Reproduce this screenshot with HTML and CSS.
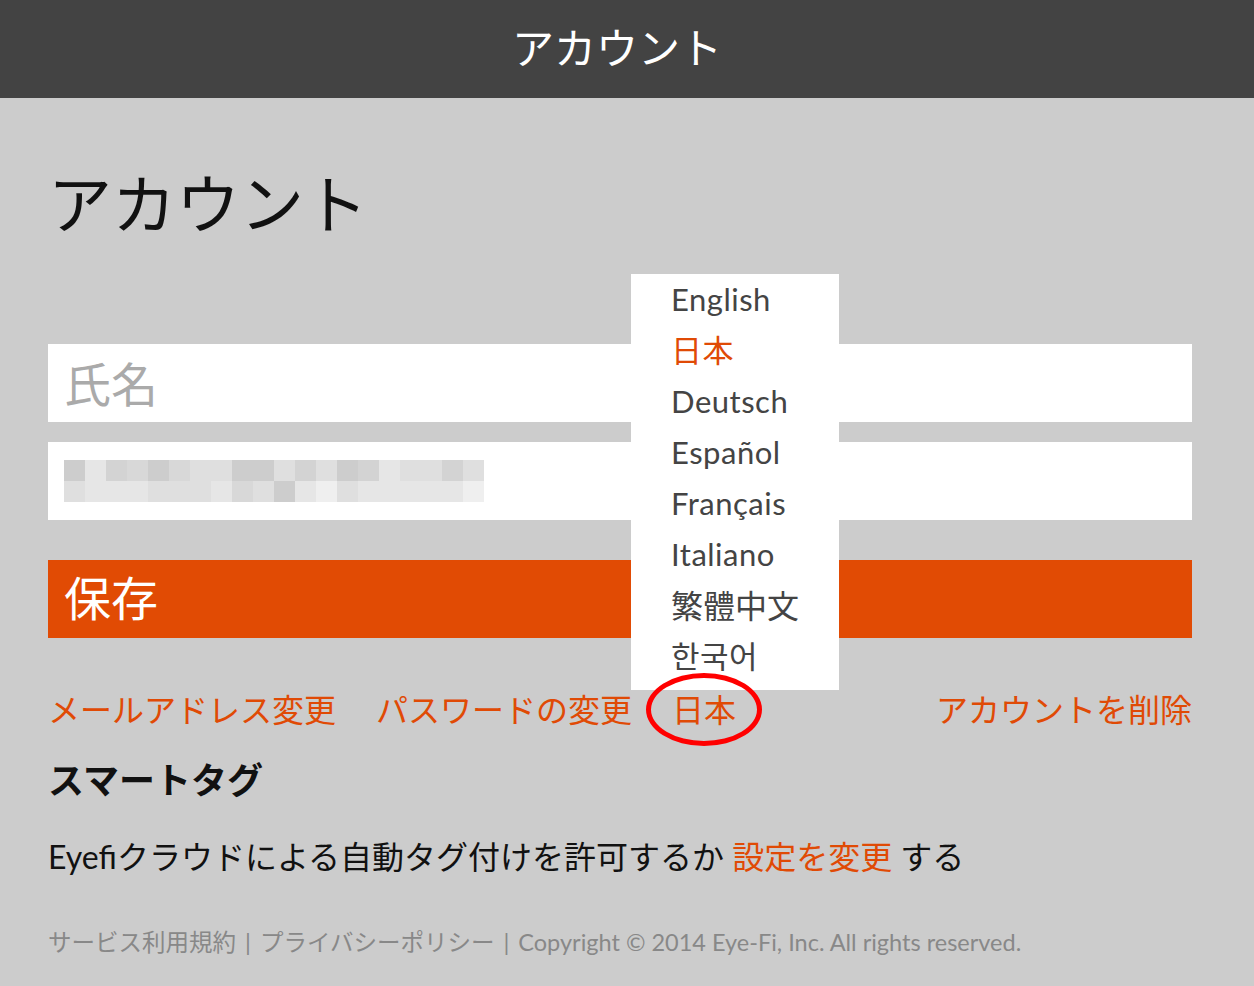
FILE: index.html
```html
<!DOCTYPE html>
<html lang="ja">
<head>
    <meta charset="UTF-8">
    <title>アカウント</title>
    <link rel="stylesheet" href="styles.css">
</head>
<body>
    <header class="topbar">アカウント</header>

    <main class="page">
        <h1 class="title">アカウント</h1>

        <div class="field placeholder">氏名</div>
        <div class="field">
            <div class="blur">
                <span class="s1"></span><span class="s5"></span><span class="s2"></span><span class="s3"></span><span class="s1"></span><span class="s3"></span><span class="s4"></span><span class="s4"></span><span class="s1"></span><span class="s1"></span><span class="s4"></span><span class="s2"></span><span class="s4"></span><span class="s1"></span><span class="s2"></span><span class="s5"></span><span class="s4"></span><span class="s4"></span><span class="s2"></span><span class="s4"></span>
                <span class="s4"></span><span class="s5"></span><span class="s5"></span><span class="s5"></span><span class="s4"></span><span class="s4"></span><span class="s4"></span><span class="s5"></span><span class="s3"></span><span class="s4"></span><span class="s1"></span><span class="s5"></span><span class="s6"></span><span class="s4"></span><span class="s5"></span><span class="s5"></span><span class="s5"></span><span class="s5"></span><span class="s5"></span><span class="s6"></span>
            </div>
        </div>

        <button class="save">保存</button>

        <div class="links">
            <a href="#">メールアドレス変更</a>
            <a href="#">パスワードの変更</a>
            <div class="lang">
                <a href="#">日本</a>
                <ul class="lang-menu">
                    <li>English</li>
                    <li class="active">日本</li>
                    <li>Deutsch</li>
                    <li>Español</li>
                    <li>Français</li>
                    <li>Italiano</li>
                    <li class="cjk">繁體中文</li>
                    <li>한국어</li>
                </ul>
                <span class="circle"></span>
            </div>
            <a href="#" class="delete">アカウントを削除</a>
        </div>

        <h2 class="section">スマートタグ</h2>
        <p class="smart">Eyefiクラウドによる自動タグ付けを許可するか <a href="#">設定を変更</a> する</p>

        <footer class="footer">サービス利用規約<span class="sep">|</span>プライバシーポリシー<span class="sep">|</span>Copyright © 2014 Eye-Fi, Inc. All rights reserved.</footer>
    </main>
</body>
</html>
```

FILE: styles.css
```css
/* General styles */
body {
    margin: 0;
    background-color: #cccccc;
    font-family: Lato, "Noto Sans CJK JP", sans-serif;
    color: #111111;
}

a {
    color: #e04a05;
    text-decoration: none;
}

.topbar {
    height: 98px;
    line-height: 92px;
    padding-right: 20px;
    background-color: #434343;
    color: #ffffff;
    text-align: center;
    font-size: 42px;
    font-family: "Noto Sans CJK JP", sans-serif;
}

.page {
    padding: 0 62px 0 48px;
}

.title {
    margin: 64px 0 0 0;
    font-size: 64px;
    line-height: 76px;
    font-weight: 400;
    font-family: "Noto Sans CJK JP", sans-serif;
}

.field {
    margin-top: 106px;
    height: 78px;
    background-color: #ffffff;
    display: flex;
    align-items: center;
    padding-left: 16px;
}

.field + .field {
    margin-top: 20px;
}

.placeholder {
    color: #aaaaaa;
    font-size: 47px;
    padding-bottom: 4px;
    height: 74px;
}

/* pixelated e-mail address */
.blur {
    display: grid;
    grid-template-columns: repeat(20, 21px);
    grid-auto-rows: 21px;
}

.s1 { background: #cdcdcd; }
.s2 { background: #d3d3d3; }
.s3 { background: #d8d8d8; }
.s4 { background: #dfdfdf; }
.s5 { background: #e6e6e6; }
.s6 { background: #efefef; }

.save {
    display: block;
    width: 100%;
    margin-top: 40px;
    height: 78px;
    border: none;
    background-color: #e14b04;
    color: #ffffff;
    font-family: "Noto Sans CJK JP", sans-serif;
    font-size: 47px;
    text-align: left;
    padding: 0 0 8px 16px;
}

.links {
    margin-top: 52px;
    display: flex;
    gap: 40px;
    font-size: 32px;
    line-height: 40px;
}

.links .delete {
    margin-left: auto;
}

.lang {
    position: relative;
}

.lang-menu {
    position: absolute;
    bottom: 100%;
    left: -41px;
    width: 168px;
    margin: 0;
    padding: 0 0 8px 40px;
    list-style: none;
    background: #ffffff;
    font-size: 31px;
    letter-spacing: 0.5px;
    line-height: 51px;
    color: #444444;
}

.lang-menu .active {
    color: #e04a05;
}

.lang-menu .cjk {
    font-size: 32px;
    letter-spacing: 0;
}

.circle {
    position: absolute;
    left: 50%;
    top: -17px;
    width: 106px;
    height: 63px;
    margin-left: -58px;
    border: 5px solid #ff0000;
    border-radius: 50%;
}

.section {
    margin: 26px 0 0 0;
    font-size: 36px;
    line-height: 44px;
    font-weight: 700;
    font-family: "Noto Sans CJK JP", sans-serif;
}

.smart {
    margin: 37px 0 0 0;
    font-size: 32px;
    line-height: 40px;
}

.footer {
    margin-top: 50px;
    font-size: 23.5px;
    line-height: 30px;
    color: #888888;
}

.sep {
    margin: 0 9px;
}
```
